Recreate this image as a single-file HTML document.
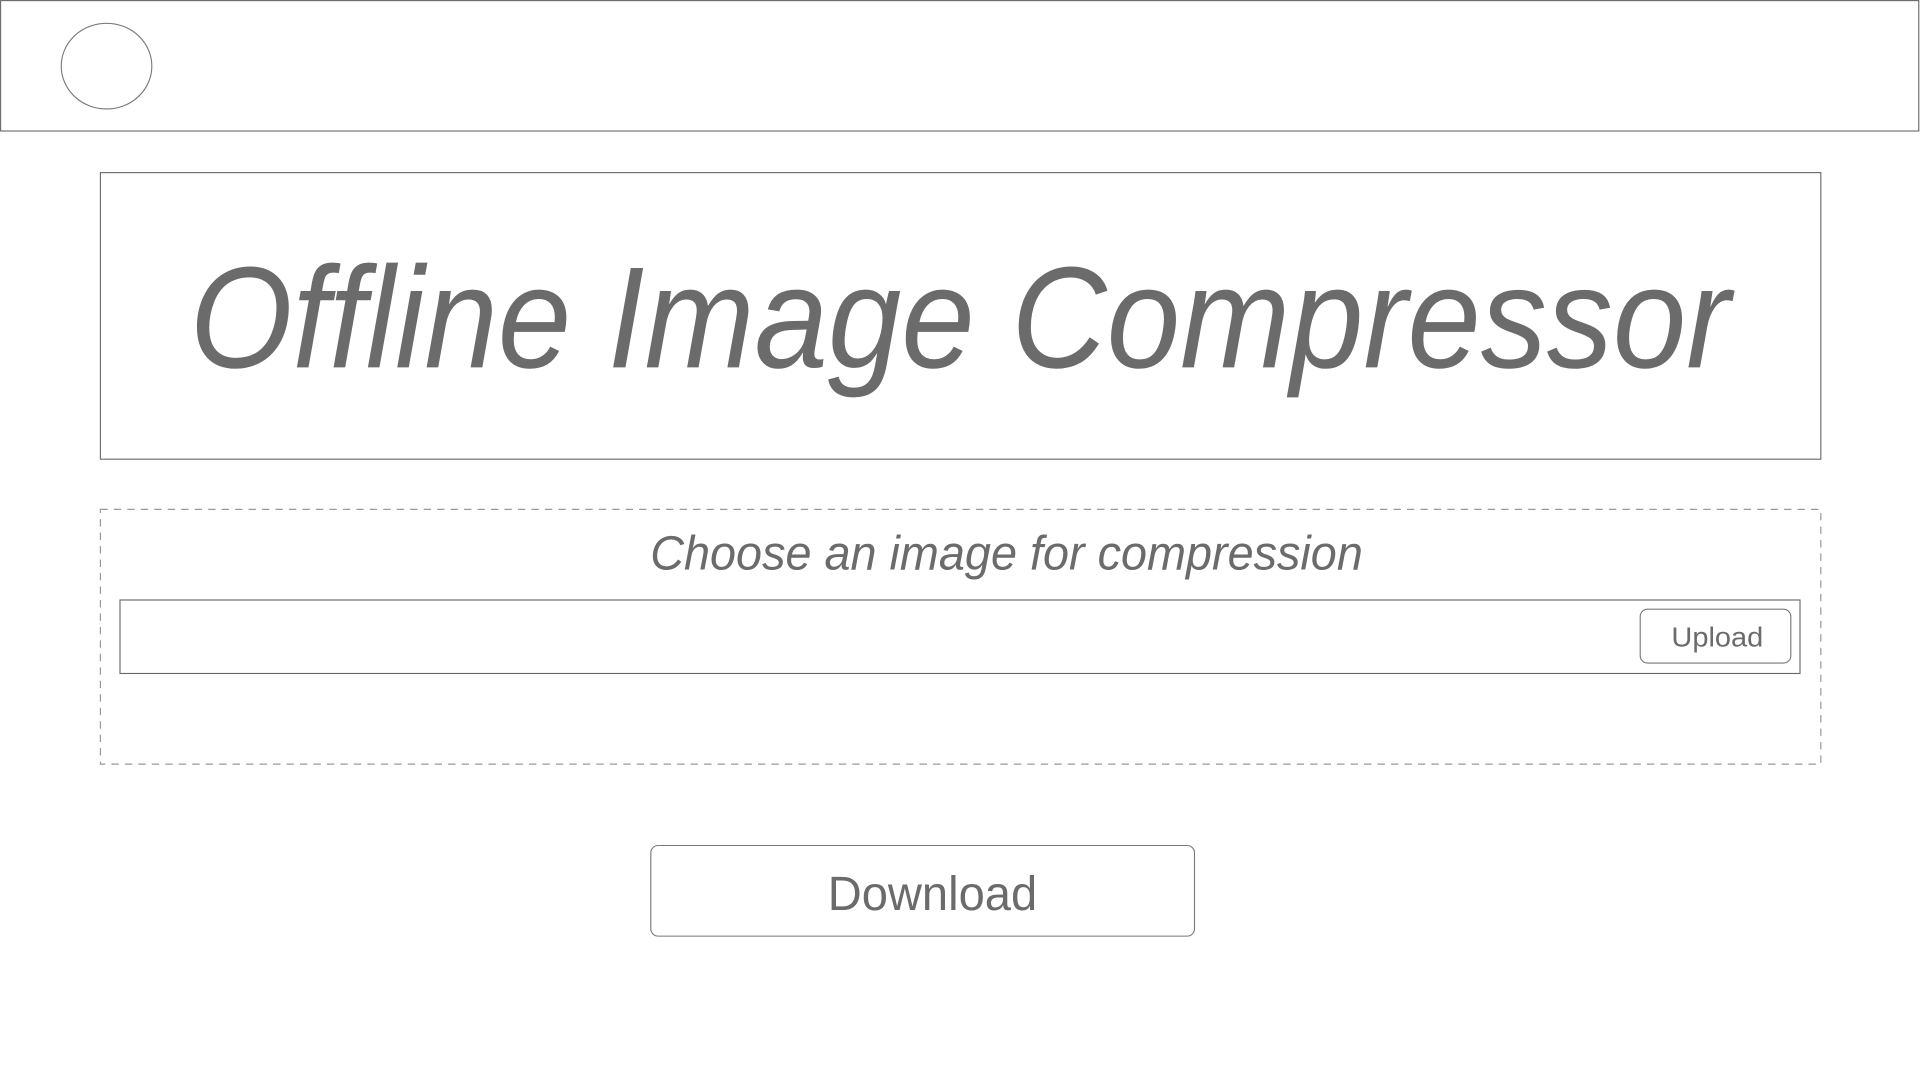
<!DOCTYPE html>
<html><head><meta charset="utf-8"><style>
html,body{margin:0;padding:0;background:#fff;width:1920px;height:1080px;overflow:hidden}
svg{display:block}
text{font-family:"Liberation Sans",sans-serif;fill:#6b6b6b}
</style></head><body>
<svg width="1920" height="1080" viewBox="0 0 1568 882" xmlns="http://www.w3.org/2000/svg">
<rect x="0.5" y="0.5" width="1566.5" height="106.5" fill="none" stroke="#666" stroke-width="0.9"/>
<ellipse cx="87" cy="54" rx="37" ry="35" fill="none" stroke="#777" stroke-width="0.9"/>
<rect x="82" y="141" width="1405" height="234" fill="none" stroke="#666" stroke-width="0.9"/>
<text x="155" y="300" font-size="118" font-style="italic" textLength="1258" lengthAdjust="spacingAndGlyphs">Offline Image Compressor</text>
<rect x="82" y="416" width="1405" height="208" fill="none" stroke="#999" stroke-width="1" stroke-dasharray="6,5"/>
<text x="531" y="465" font-size="39" font-style="italic" textLength="582" lengthAdjust="spacingAndGlyphs">Choose an image for compression</text>
<rect x="98" y="490" width="1372" height="60" fill="none" stroke="#666" stroke-width="0.9"/>
<rect x="1339.5" y="497.5" width="123" height="44" rx="6" fill="none" stroke="#777" stroke-width="0.9"/>
<text x="1365" y="528" font-size="23" textLength="75" lengthAdjust="spacingAndGlyphs">Upload</text>
<rect x="531.5" y="690.5" width="444" height="74" rx="6" fill="none" stroke="#777" stroke-width="0.9"/>
<text x="676" y="743" font-size="39" textLength="171" lengthAdjust="spacingAndGlyphs">Download</text>
</svg>
</body></html>
